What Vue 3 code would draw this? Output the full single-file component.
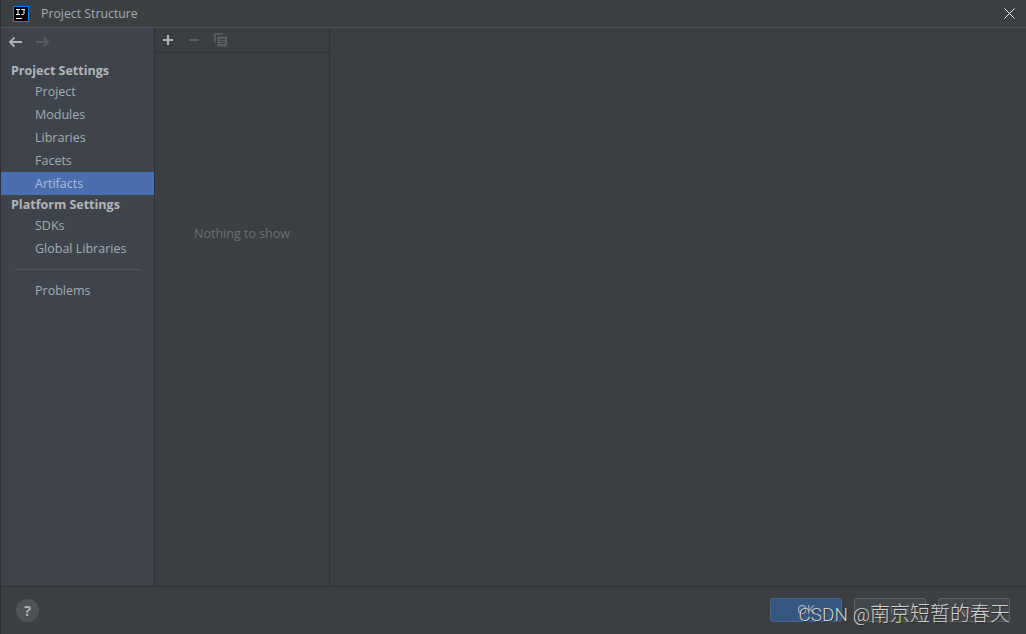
<script setup>
const groups = [
  { title: 'Project Settings', items: ['Project', 'Modules', 'Libraries', 'Facets', 'Artifacts'] },
  { title: 'Platform Settings', items: ['SDKs', 'Global Libraries'] },
]
</script>

<template>
  <div class="dialog">
    <header class="titlebar">
      <svg class="logo" width="16" height="16" viewBox="0 0 16 16">
        <rect x="0.5" y="0.5" width="15" height="15" fill="#000" stroke="#087cfa" />
        <path d="M3 3.500h4M5 3.500v5M3 8.500h4M8.500 3.500h3.500M11 3.500v4q0 1-1 1H8.500" stroke="#fff" stroke-width="1" fill="none" />
        <path d="M3 12.500h6" stroke="#fff" stroke-width="1" />
      </svg>
      <span class="title">Project Structure</span>
      <svg class="close" width="11" height="11" viewBox="0 0 11 11">
        <path d="M.5.5l10 10M10.500.5l-10 10" stroke="#f0f0f0" stroke-width="1" />
      </svg>
    </header>

    <div class="body">
      <aside class="sidebar">
        <div class="nav-arrows">
          <svg width="14" height="12" viewBox="0 0 14 12">
            <path d="M14 6H2M6.500 1.500L2 6l4.500 4.500" stroke="#afb1b3" stroke-width="1.800" fill="none" />
          </svg>
          <svg width="14" height="12" viewBox="0 0 14 12">
            <path d="M0 6h12M7.500 1.500L12 6l-4.500 4.500" stroke="#5a5d5f" stroke-width="1.800" fill="none" />
          </svg>
        </div>
        <template v-for="g in groups" :key="g.title">
          <div class="group">{{ g.title }}</div>
          <div v-for="i in g.items" :key="i" class="item" :class="{ selected: i === 'Artifacts' }">{{ i }}</div>
        </template>
        <div class="separator"></div>
        <div class="item">Problems</div>
      </aside>

      <section class="list">
        <div class="toolbar">
          <svg width="12" height="12" viewBox="0 0 12 12">
            <path d="M6 1v10M1 6h10" stroke="#afb1b3" stroke-width="2" />
          </svg>
          <svg width="12" height="12" viewBox="0 0 12 12">
            <path d="M1 6h10" stroke="#5c5f61" stroke-width="2" />
          </svg>
          <svg width="14" height="14" viewBox="0 0 14 14">
            <path d="M1 10V1h8" stroke="#5c5f61" stroke-width="1.500" fill="none" />
            <path d="M3.500 3.500H13v10H3.500z" fill="#5c5f61" />
            <path d="M5.500 6.500h5.500M5.500 8.500h5.500M5.500 10.500h5.500" stroke="#3c3f41" stroke-width="1" />
          </svg>
        </div>
        <div class="empty">Nothing to show</div>
      </section>

      <main class="detail"></main>
    </div>

    <footer class="footer">
      <div class="help">?</div>
      <div class="buttons">
        <div class="btn primary"><span class="btn-label">OK</span></div>
        <div class="btn"><span class="btn-label">Cancel</span></div>
        <div class="btn"><span class="btn-label">Apply</span></div>
      </div>
      <div class="watermark"><span class="wm-latin">CSDN @</span><span class="wm-cjk">南京短暂的春天</span></div>
    </footer>
  </div>
</template>

<style>
html, body { margin: 0; background: #3c3f41; }
</style>

<style scoped>
.dialog {
  width: 1026px;
  height: 634px;
  display: flex;
  flex-direction: column;
  box-sizing: border-box;
  border-left: 1px solid #2f3133;
  background: #3c3f41;
  font-family: "Open Sans", "Noto Sans", sans-serif;
  font-size: 13px;
  color: #a9b0b3;
  overflow: hidden;
}
.titlebar {
  height: 27px;
  flex: none;
  display: flex;
  align-items: center;
  padding-left: 12px;
  border-bottom: 1px solid #525456;
  background: #3c3f41;
}
.logo { margin-right: 12px; }
.title { color: #a4adb3; font-size: 12.300px; }
.close { margin-left: auto; margin-right: 11px; margin-top: -1px; }
.body { flex: 1; display: flex; min-height: 0; }
.sidebar {
  width: 153px;
  flex: none;
  background: #3f444c;
  border-right: 1px solid #2f3133;
  display: flex;
  flex-direction: column;
}
.nav-arrows {
  height: 26px;
  display: flex;
  align-items: center;
  gap: 14px;
  padding-left: 7px;
  margin-bottom: 6px;
  margin-top: 1px;
}
.group {
  height: 19px;
  line-height: 20px;
  padding-left: 10px;
  font-weight: 700;
  color: #b2b5b7;
  font-size: 12.500px;
}
.item {
  height: 23px;
  line-height: 23px;
  padding-left: 34px;
  color: #a2adb3;
  font-size: 12.500px;
}
.item.selected { background: #4b6eaf; color: #a8bfd8; }
.separator {
  height: 1px;
  background: #4f535b;
  margin: 9px 13px 9px 14px;
}
.list {
  width: 174px;
  flex: none;
  border-right: 1px solid #2f3133;
  display: flex;
  flex-direction: column;
}
.toolbar {
  height: 24px;
  flex: none;
  display: flex;
  align-items: center;
  gap: 14px;
  padding-left: 7px;
  border-bottom: 1px solid #323436;
}
.empty {
  flex: 1;
  display: flex;
  align-items: center;
  justify-content: center;
  color: #6c6f71;
  padding-bottom: 173px;
  font-size: 12.500px;
}
.detail { flex: 1; }
.footer {
  position: relative;
  height: 47px;
  flex: none;
  border-top: 1px solid #2f3133;
  display: flex;
  align-items: center;
  padding: 0 16px 0 15px;
}
.help {
  width: 23px;
  height: 23px;
  border-radius: 50%;
  background: #505356;
  color: #b0b3b5;
  font-weight: 700;
  font-size: 15px;
  line-height: 23px;
  text-align: center;
}
.buttons { margin-left: auto; display: flex; gap: 12px; margin-top: -1px; }
.btn {
  width: 72px;
  height: 24px;
  box-sizing: border-box;
  border: 1px solid #5e6060;
  border-radius: 3px;
  background: #45484a;
  color: #6d7072;
  text-align: center;
  line-height: 22px;
  font-size: 12.500px;
}
.btn-label { filter: blur(0.6px); }
.btn.primary { background: #365880; border-color: #44688e; color: #a9b7c6; }
.watermark {
  position: absolute;
  right: 16px;
  top: 13px;
  display: flex;
  align-items: baseline;
  line-height: 26px;
  color: #cdd0d2;
  text-shadow: 1px 1px 1px #2a2c2e;
  white-space: nowrap;
}
.wm-latin {
  font-family: Roboto, "Liberation Sans", sans-serif;
  font-weight: 300;
  font-size: 19px;
  white-space: pre;
}
.wm-cjk {
  font-family: "Noto Sans CJK SC", sans-serif;
  font-weight: 300;
  font-size: 20px;
}
</style>
